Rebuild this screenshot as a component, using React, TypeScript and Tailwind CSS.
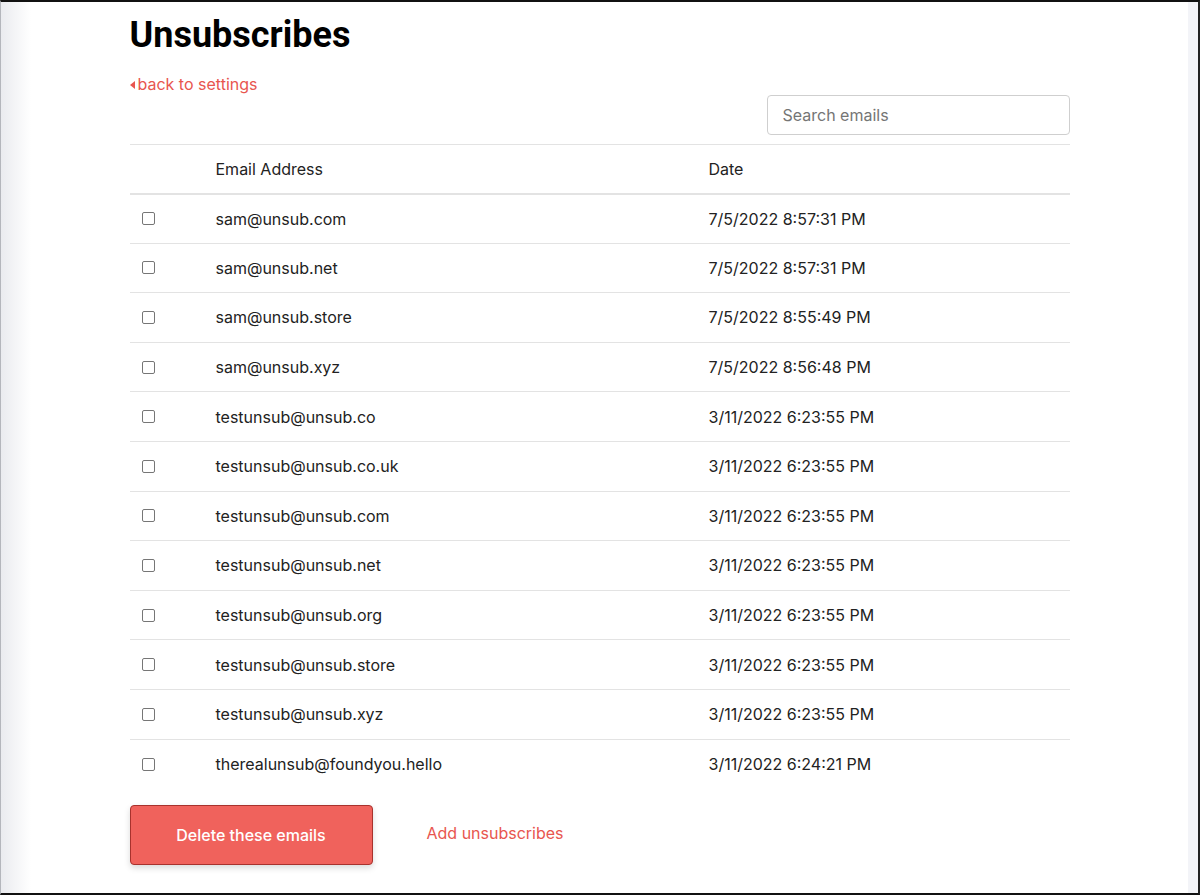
import { useState } from "react";

const rows = [
  { email: "sam@unsub.com", date: "7/5/2022 8:57:31 PM" },
  { email: "sam@unsub.net", date: "7/5/2022 8:57:31 PM" },
  { email: "sam@unsub.store", date: "7/5/2022 8:55:49 PM" },
  { email: "sam@unsub.xyz", date: "7/5/2022 8:56:48 PM" },
  { email: "testunsub@unsub.co", date: "3/11/2022 6:23:55 PM" },
  { email: "testunsub@unsub.co.uk", date: "3/11/2022 6:23:55 PM" },
  { email: "testunsub@unsub.com", date: "3/11/2022 6:23:55 PM" },
  { email: "testunsub@unsub.net", date: "3/11/2022 6:23:55 PM" },
  { email: "testunsub@unsub.org", date: "3/11/2022 6:23:55 PM" },
  { email: "testunsub@unsub.store", date: "3/11/2022 6:23:55 PM" },
  { email: "testunsub@unsub.xyz", date: "3/11/2022 6:23:55 PM" },
  { email: "therealunsub@foundyou.hello", date: "3/11/2022 6:24:21 PM" },
];

export default function App() {
  const [query, setQuery] = useState("");

  return (
    <div className="h-[895px] overflow-hidden border-t-2 border-b-2 border-l border-r-2 border-t-[#111] border-b-[#111] border-l-[#b4b6bc] border-r-[#222] bg-[linear-gradient(to_right,#eaebef,#ffffff_30px,#ffffff_calc(100%-10px),#f3f4f8_calc(100%-10px))] font-['Inter',sans-serif] text-[#222]">
      <div className="mx-auto w-[940px] pt-[11px]">
        <h1 className="font-['Roboto',sans-serif] text-[36px] font-bold leading-[44px] text-black">
          Unsubscribes
        </h1>

        <a href="#" className="mt-[16px] flex items-center gap-[3px] text-[16px] leading-[22px] text-[#e8564f]">
          <svg width="5" height="8" viewBox="0 0 5 8" className="mt-[1px]">
            <path d="M5 0 L0 4 L5 8 Z" fill="currentColor" />
          </svg>
          back to settings
        </a>

        <div className="flex justify-end">
          <input
            value={query}
            onChange={(e) => setQuery(e.target.value)}
            placeholder="Search emails"
            className="h-[40px] w-[303px] rounded-[4px] border border-[#cfcfcf] px-[15px] text-[16px] text-[#333] outline-none placeholder:text-[#757575]"
          />
        </div>

        <table className="mt-[9px] w-full border-collapse text-left text-[16px]">
          <thead>
            <tr className="h-[49px] border-t border-b-2 border-t-[#e3e3e3] border-b-[#e3e3e3]">
              <th className="w-[74px]" />
              <th className="w-[493px] px-[12px] font-normal">Email Address</th>
              <th className="px-[12px] font-normal">Date</th>
            </tr>
          </thead>
          <tbody>
            {rows
              .filter((r) => r.email.includes(query))
              .map((row, i) => (
                <tr
                  key={row.email}
                  className={`h-[49.6px] ${i < rows.length - 1 ? "border-b border-[#e3e3e3]" : ""}`}
                >
                  <td className="pl-[12px]">
                    <input
                      type="checkbox"
                      className="block h-[13px] w-[13px] appearance-none rounded-[2px] border border-[#767676] bg-white"
                    />
                  </td>
                  <td className="px-[12px]">{row.email}</td>
                  <td className="px-[12px]">{row.date}</td>
                </tr>
              ))}
          </tbody>
        </table>

        <div className="mt-[16px] flex items-center gap-[54px]">
          <button
            type="button"
            className="h-[60px] w-[243px] rounded-[4px] border border-[#a8322d] bg-[#f0625c] text-[16px] font-medium text-white shadow-[0_3px_6px_rgba(0,0,0,0.15)]"
          >
            Delete these emails
          </button>
          <a href="#" className="-mt-[4px] text-[16px] text-[#e8564f]">
            Add unsubscribes
          </a>
        </div>
      </div>
    </div>
  );
}
